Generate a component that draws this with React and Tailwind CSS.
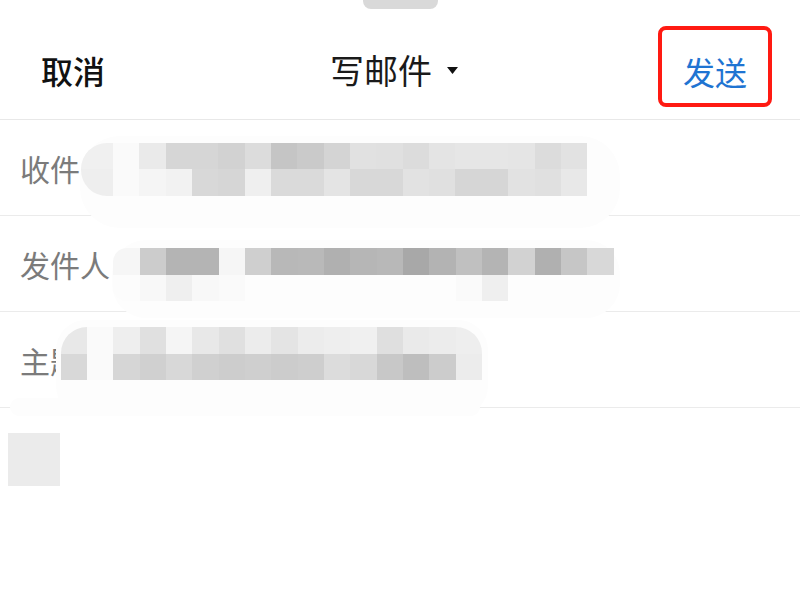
import React from "react";

const A_TOP = ["f0","fa","ea","d6","d6","d2","dc","c5","ca","d4","e1","e0","dc","e4","e6","e6","e5","dc","e2"];
const A_BOT = ["ee","fa","f5","f2","d8","d6","ef","da","da","e4","d8","d8","e2","e0","d6","d6","e2","e0","e8"];
const B_TOP = ["f6","cc","b4","b4","f6","cf","b8","b9","b0","b6","b8","a8","b3","c0","b4","d2","b0","c6","d8"];
const B_BOT = ["fc","f8","ef","f8","fa","fd","fd","fd","fd","fd","fd","fd","fd","fa","ef","fd","fd","fd","fd"];
const C_TOP = ["e8","fa","ee","e0","f5","e8","e0","ec","e4","ec","ee","f0","df","ea","ec","ee"];
const C_BOT = ["d8","fa","d6","d0","d8","d0","cd","cf","cc","ce","dc","d8","c8","be","cc","ec"];

const g = (c) => "#" + c + c + c;

function Cells({ row, firstWide }) {
  return (
    <div className="flex">
      {row.map((c, i) => (
        <div
          key={i}
          className={i === 0 && firstWide ? "w-[32px] h-[26.35px] shrink-0" : "w-[26.35px] h-[26.35px] shrink-0"}
          style={{ backgroundColor: g(c) }}
        />
      ))}
    </div>
  );
}

export default function App() {
  return (
    <div className="relative w-[800px] h-[600px] overflow-hidden bg-white font-['Noto_Sans_CJK_SC','Noto_Sans',sans-serif]">
      {/* grabber */}
      <div className="flex h-[9px] justify-center">
        <div className="w-[75px] h-[9px] rounded-b-[8px] bg-[#d9d9d9]" />
      </div>

      {/* header */}
      <div className="flex h-[111px] items-center pt-[11px] border-b border-[#e8e8e8]">
        <div className="w-[190px] pl-[41px] text-[32px] leading-none font-medium text-[#111111]">取消</div>
        <div className="flex flex-1 items-center justify-center gap-[15px]">
          <span className="text-[34px] leading-none text-[#1a1a1a]">写邮件</span>
          <svg width="11" height="7" viewBox="0 0 11 7" className="mt-[2px]">
            <path d="M0 0 H11 L5.5 7 Z" fill="#111" />
          </svg>
        </div>
        <div className="w-[202px] flex justify-end pr-[28px]">
          <div className="mb-[6px] flex h-[81px] w-[114px] items-center justify-center rounded-[8px] border-[4px] border-[#ff1a12] pt-[8px]">
            <span className="text-[32px] leading-none text-[#1f74d2]">发送</span>
          </div>
        </div>
      </div>

      {/* fields */}
      <div className="flex h-[96px] items-center border-b border-[#ebebeb] pl-[20px] text-[30px] leading-none text-[#7b7b7b]">收件</div>
      <div className="flex h-[96px] items-center border-b border-[#ebebeb] pl-[20px] text-[30px] leading-none text-[#7b7b7b]">发件人</div>
      <div className="flex h-[96px] items-center border-b border-[#ebebeb] pl-[20px] text-[30px] leading-none text-[#7b7b7b]">主题</div>

      {/* redaction halos */}
      <div className="absolute left-[80px] top-[136px] h-[92px] w-[540px] rounded-[40px] bg-[#fdfdfd]" />
      <div className="absolute left-[112px] top-[240px] h-[78px] w-[508px] rounded-[34px] bg-[#fdfdfd]" />
      <div className="absolute left-[56px] top-[320px] h-[96px] w-[432px] rounded-[30px] bg-[#fdfdfd]" />
      <div className="absolute left-[10px] top-[398px] h-[18px] w-[470px] rounded-[9px] bg-[#fdfdfd]" />

      {/* redaction mosaic */}
      <div className="absolute left-[81px] top-[143px] flex flex-col overflow-hidden rounded-l-[26px]">
        <Cells row={A_TOP} firstWide />
        <Cells row={A_BOT} firstWide />
      </div>
      <div className="absolute left-[113.2px] top-[248.4px] flex flex-col overflow-hidden rounded-l-[14px]">
        <Cells row={B_TOP} />
        <Cells row={B_BOT} />
      </div>
      <div className="absolute left-[60.5px] top-[327.45px] flex flex-col overflow-hidden rounded-t-[26px]">
        <Cells row={C_TOP} />
        <Cells row={C_BOT} />
      </div>
      <div className="absolute left-[7.8px] top-[432.85px] h-[52.7px] w-[52.7px] bg-[#ebebeb]" />
    </div>
  );
}
